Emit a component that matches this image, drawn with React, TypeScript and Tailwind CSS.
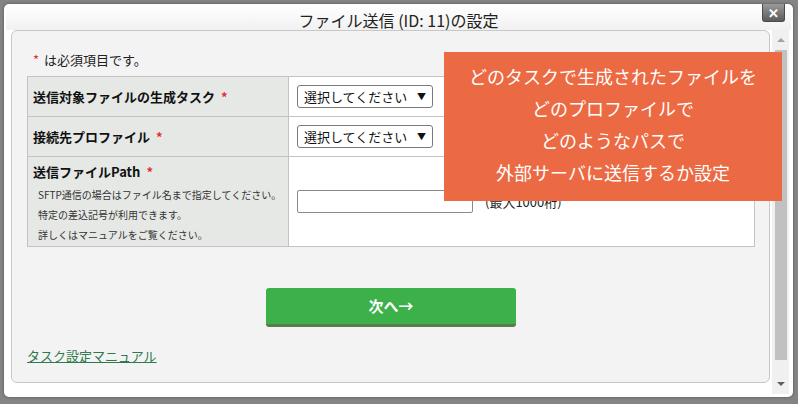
import React from "react";

const FONT = { fontFamily: '"Noto Sans CJK JP", "Noto Sans", sans-serif' };

function Req() {
  return <span className="text-[#e0302c] ml-[6px]">*</span>;
}

function SelectBox() {
  return (
    <div className="w-[136px] h-[23px] border border-[#7a7a7a] rounded-[3px] bg-white flex items-center justify-between pl-[6px] pr-[6px] text-[13px] leading-[20px] text-[#111]">
      <span>選択してください</span>
      <span className="text-[9px] leading-[10px]">▼</span>
    </div>
  );
}

export default function App() {
  return (
    <div
      className="relative w-[798px] h-[404px] bg-[#848484] overflow-hidden pt-[4px] pl-[4px]"
      style={FONT}
    >
      <div className="relative w-[789px] h-[393px] bg-white rounded-[5px] flex flex-col shadow-[0_0_3px_rgba(0,0,0,0.4)]">
        {/* title bar */}
        <div className="h-[26px] mx-[2px] rounded-t-[5px] bg-gradient-to-b from-white to-[#f1f1f1] flex justify-center">
          <span className="pt-[6px] text-[16px] leading-[20px] text-[#222]">
            ファイル送信 (ID: 11)の設定
          </span>
        </div>
        {/* close button */}
        <div className="absolute left-[758px] top-0 w-[23px] h-[18px] rounded-b-[3px] border border-t-0 border-[#4a4a4a] bg-gradient-to-b from-[#9a9a9a] to-[#5c5c5c] flex items-center justify-center">
          <span className="text-white text-[13px] leading-[14px] font-bold">✕</span>
        </div>

        {/* body */}
        <div className="flex flex-row pl-[7px] gap-[2px]">
          <div className="w-[759px] h-[353px] border border-[#c8c8c8] rounded-[6px] bg-[#f3f3f3] pl-[15px] pr-[14px]">
            <div className="mt-[19px] pl-[6px] text-[13px] leading-[20px] text-[#222]">
              <span className="text-[#e0302c]">*</span>
              <span className="ml-[5px]">は必須項目です。</span>
            </div>
            <div className="mt-[6px] w-[728px] border border-[#c3c3c3] bg-white">
              <div className="flex h-[40px] border-b border-[#c3c3c3]">
                <div className="w-[261px] border-r border-[#c3c3c3] bg-[#e6e8e5] flex items-center pl-[5px] text-[13px] font-bold text-[#111]">
                  送信対象ファイルの生成タスク<Req />
                </div>
                <div className="flex items-center pl-[8px]">
                  <SelectBox />
                </div>
              </div>
              <div className="flex h-[40px] border-b border-[#c3c3c3]">
                <div className="w-[261px] border-r border-[#c3c3c3] bg-[#e6e8e5] flex items-center pl-[5px] text-[13px] font-bold text-[#111]">
                  接続先プロファイル<Req />
                </div>
                <div className="flex items-center pl-[8px]">
                  <SelectBox />
                </div>
              </div>
              <div className="flex h-[89px]">
                <div className="w-[261px] border-r border-[#c3c3c3] bg-[#e6e8e5] pl-[5px] pt-[5px] text-[#111]">
                  <div className="text-[13px] leading-[20px] font-bold">
                    送信ファイルPath<Req />
                  </div>
                  <div className="mt-[3px] pl-[5px] text-[10px] leading-[20px] text-[#333]">
                    <div>SFTP通信の場合はファイル名まで指定してください。</div>
                    <div>特定の差込記号が利用できます。</div>
                    <div>詳しくはマニュアルをご覧ください。</div>
                  </div>
                </div>
                <div className="flex items-center pl-[8px]">
                  <div className="w-[176px] h-[23px] border border-[#8a8a8a] rounded-[2px] bg-white" />
                  <span className="ml-[12px] text-[13px] text-[#222]">(最大1000桁)</span>
                </div>
              </div>
            </div>
            <div className="mt-[41px] flex justify-center">
              <div className="w-[250px] h-[39px] bg-[#3cb049] border-b-[3px] border-[#5a7a4f] rounded-[3px] flex items-center justify-center text-white font-bold text-[15px]">
                次へ→
              </div>
            </div>
            <div className="mt-[19px] text-[13px] leading-[20px]">
              <span className="text-[#2f7a4c] underline">タスク設定マニュアル</span>
            </div>
          </div>
          {/* scrollbar */}
          <div className="w-[17px] h-[364px] bg-[#f0f0f0] flex flex-col items-center">
            <div className="h-[20px] flex items-center justify-center">
              <div className="w-0 h-0 border-l-[4px] border-r-[4px] border-b-[4px] border-l-transparent border-r-transparent border-b-[#a3a3a3]" />
            </div>
            <div className="w-[12px] h-[310px] bg-[#c1c1c1]" />
            <div className="flex-1" />
            <div className="h-[20px] flex items-center justify-center">
              <div className="w-0 h-0 border-l-[4px] border-r-[4px] border-t-[4px] border-l-transparent border-r-transparent border-t-[#606060]" />
            </div>
          </div>
        </div>
      </div>

      {/* orange annotation overlay */}
      <div className="absolute left-[444px] top-[52px] w-[338px] h-[149px] bg-[#ec6a43] pt-[8px] text-white text-[18px] leading-[32px] text-center">
        <div>どのタスクで生成されたファイルを</div>
        <div>どのプロファイルで</div>
        <div>どのようなパスで</div>
        <div>外部サーバに送信するか設定</div>
      </div>
    </div>
  );
}
